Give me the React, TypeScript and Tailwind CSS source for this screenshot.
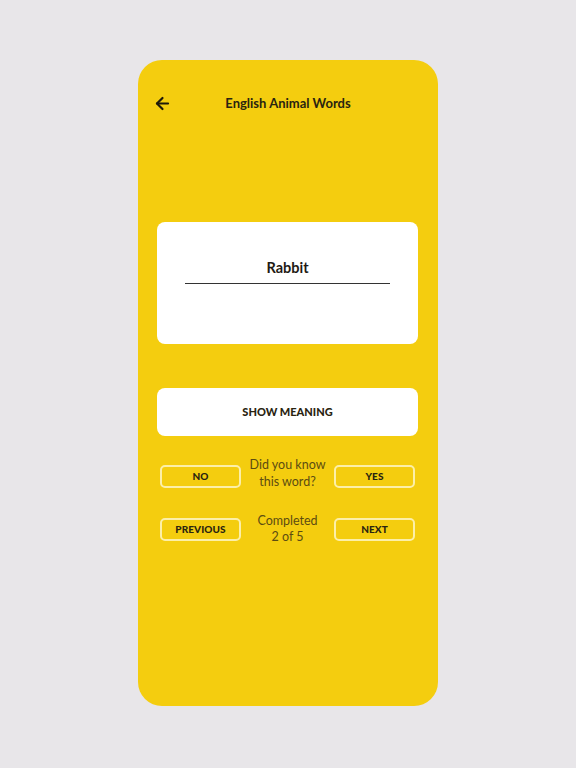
import { ArrowLeft } from 'lucide-react'

const font = { fontFamily: 'Lato, "Open Sans", sans-serif' }

function OutlineButton({ label }: { label: string }) {
  return (
    <button className="w-[81px] h-[23px] rounded-[5px] border-2 border-[#fcefa8] text-[10px] font-black tracking-[0.1px] text-[#2a2410]">
      {label}
    </button>
  )
}

export default function App() {
  return (
    <div className="min-h-screen w-full bg-[#e8e6e9] flex justify-center pt-[60px]" style={font}>
      <div className="w-[300px] h-[646px] rounded-[24px] bg-[#f4cd0f] flex flex-col">
        {/* Header */}
        <div className="relative mt-[30px] h-[28px] flex items-center justify-center">
          <button className="absolute left-[15px] top-[4px] text-[#1f1a0a]">
            <ArrowLeft size={19} strokeWidth={2.75} />
          </button>
          <span className="text-[13px] font-bold text-[#2a2410]">English Animal Words</span>
        </div>

        {/* Word card */}
        <div className="ml-[19px] mt-[104px] w-[261px] h-[122px] rounded-[8px] bg-white flex flex-col items-center pt-[36px]">
          <span className="text-[14.5px] font-bold leading-[20px] text-[#1f1a14]">Rabbit</span>
          <div className="mt-[5px] w-[205px] border-b-[1.5px] border-[#333]" />
        </div>

        {/* Show meaning */}
        <button className="ml-[19px] mt-[44px] w-[261px] h-[48px] rounded-[8px] bg-white text-[11px] font-black text-[#2a2410]">
          SHOW MEANING
        </button>

        {/* Did you know row */}
        <div className="mt-[19px] h-[36px] pl-[22px] pr-[23px] flex items-center justify-between">
          <div className="pt-[4px]">
            <OutlineButton label="NO" />
          </div>
          <div className="text-center text-[12.5px] leading-[17px] text-[#5c4c12]">
            Did you know<br />this word?
          </div>
          <div className="pt-[4px]">
            <OutlineButton label="YES" />
          </div>
        </div>

        {/* Navigation row */}
        <div className="mt-[20px] h-[36px] pl-[22px] pr-[23px] flex items-center justify-between">
          <OutlineButton label="PREVIOUS" />
          <div className="text-center text-[12.5px] leading-[16px] text-[#5c4c12]">
            Completed<br />2 of 5
          </div>
          <OutlineButton label="NEXT" />
        </div>
      </div>
    </div>
  )
}
